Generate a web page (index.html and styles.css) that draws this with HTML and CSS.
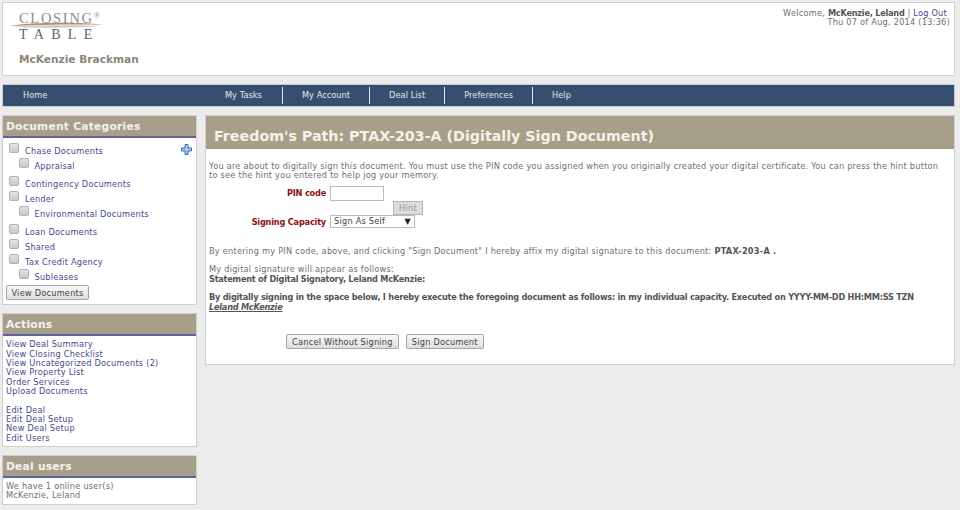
FILE: index.html
```html
<!DOCTYPE html>
<html lang="en">
<head>
<meta charset="utf-8">
<title>Closing Table</title>
<link rel="stylesheet" href="styles.css">
</head>
<body>
<header class="masthead">
  <div class="brand">
    <div class="logo">
      <svg class="swoosh" width="94" height="10" viewBox="0 0 94 10"><path d="M0 5C20 1 72 1 94 4C72 3 24 4 0 5Z" fill="#a98f80"/><path d="M4 6C24 4 70 4 90 5C70 7 24 7 4 6Z" fill="#d8c8bd"/></svg>
      <div class="logo-top">CLOSING<sup>®</sup></div>
      <div class="logo-bottom">TABLE</div>
    </div>
    <div class="company">McKenzie Brackman</div>
  </div>
  <div class="welcome">
    <div class="welcome-line">Welcome, <b>McKenzie, Leland</b> | <a href="#">Log Out</a></div>
    <div>Thu 07 of Aug, 2014 (13:36)</div>
  </div>
</header>
<nav class="nav">
  <a class="nav-home" href="#">Home</a>
  <a class="nav-item nav-tasks" href="#">My Tasks</a>
  <a class="nav-item" href="#">My Account</a>
  <a class="nav-item" href="#">Deal List</a>
  <a class="nav-item" href="#">Preferences</a>
  <a class="nav-item nav-last" href="#">Help</a>
</nav>
<div class="columns">
  <aside class="side">
    <section class="panel">
      <h2 class="panel-title">Document Categories</h2>
      <div class="panel-body tree">
        <svg class="plus" width="11" height="11" viewBox="0 0 11 11"><path d="M4 .5h3v3.500h3.500v3H7v3.500H4V7H.5V4H4Z" fill="#a9c4e6" stroke="#3f6fb5"/></svg>
        <div class="row"><input type="checkbox" class="check"><a href="#">Chase Documents</a></div>
        <div class="row sub last-sub"><input type="checkbox" class="check"><a href="#">Appraisal</a></div>
        <div class="row"><input type="checkbox" class="check"><a href="#">Contingency Documents</a></div>
        <div class="row"><input type="checkbox" class="check"><a href="#">Lender</a></div>
        <div class="row sub last-sub"><input type="checkbox" class="check"><a href="#">Environmental Documents</a></div>
        <div class="row"><input type="checkbox" class="check"><a href="#">Loan Documents</a></div>
        <div class="row"><input type="checkbox" class="check"><a href="#">Shared</a></div>
        <div class="row"><input type="checkbox" class="check"><a href="#">Tax Credit Agency</a></div>
        <div class="row sub"><input type="checkbox" class="check"><a href="#">Subleases</a></div>
        <button class="btn view-btn" type="button">View Documents</button>
      </div>
    </section>
    <section class="panel">
      <h2 class="panel-title">Actions</h2>
      <div class="panel-body links">
        <a href="#">View Deal Summary</a>
        <a href="#">View Closing Checklist</a>
        <a href="#">View Uncategorized Documents (2)</a>
        <a href="#">View Property List</a>
        <a href="#">Order Services</a>
        <a class="gap" href="#">Upload Documents</a>
        <a href="#">Edit Deal</a>
        <a href="#">Edit Deal Setup</a>
        <a href="#">New Deal Setup</a>
        <a href="#">Edit Users</a>
      </div>
    </section>
    <section class="panel">
      <h2 class="panel-title">Deal users</h2>
      <div class="panel-body users">
        <div>We have 1 online user(s)</div>
        <div>McKenzie, Leland</div>
      </div>
    </section>
  </aside>
  <main class="main">
    <h1 class="main-title">Freedom's Path: PTAX-203-A (Digitally Sign Document)</h1>
    <div class="main-body">
      <p class="intro">You are about to digitally sign this document. You must use the PIN code you assigned when you originally created your digital certificate. You can press the hint button to see the hint you entered to help jog your memory.</p>
      <div class="form">
        <label class="form-label">PIN code</label>
        <input class="pin" type="text">
        <button class="hint" type="button" disabled>Hint</button>
        <label class="form-label">Signing Capacity</label>
        <div class="select"><span>Sign As Self</span><span class="arrow">▼</span></div>
      </div>
      <p class="affix">By entering my PIN code, above, and clicking "Sign Document" I hereby affix my digital signature to this document: <b>PTAX-203-A .</b></p>
      <p class="appear">My digital signature will appear as follows:<br><b>Statement of Digital Signatory, Leland McKenzie:</b></p>
      <p class="execute"><b>By digitally signing in the space below, I hereby execute the foregoing document as follows: in my individual capacity. Executed on YYYY-MM-DD HH:MM:SS TZN</b><br><b class="sig">Leland McKenzie</b></p>
      <div class="actions">
        <button class="btn" type="button">Cancel Without Signing</button>
        <button class="btn" type="button">Sign Document</button>
      </div>
    </div>
  </main>
</div>
</body>
</html>
```
FILE: styles.css
```css
* { box-sizing: border-box; }
html, body { height: 100%; }
body {
  margin: 0;
  padding: 2px 5px 0 2px;
  height: 510px;
  overflow: hidden;
  background: #ececec;
  color: #6f6f6f;
  font: 8.2px/9.35px "DejaVu Sans", Verdana, sans-serif;
  letter-spacing: 0.24px;
}
a { color: #47478f; text-decoration: none; }
b { color: #555; letter-spacing: -0.24px; }
.affix b { letter-spacing: 0.24px; }

.masthead {
  height: 74px;
  background: #fff;
  border: 1px solid #d2d2d2;
  display: flex;
  justify-content: space-between;
}
.brand { padding: 7px 0 0 16px; }
.logo { position: relative; width: 94px; font-family: "Liberation Serif", serif; }
.swoosh { position: absolute; left: -9px; top: 11px; }
.logo-top { font-size: 14.5px; line-height: 17px; letter-spacing: 1.7px; color: #8d8d8d; }
.logo-top sup { font-size: 8px; line-height: 0; vertical-align: 5px; letter-spacing: 0; }
.logo-bottom { font-size: 14px; line-height: 15px; letter-spacing: 7.3px; color: #566878; }
.company { margin-top: 11px; font-size: 10.6px; line-height: 13px; font-weight: bold; color: #8b857a; letter-spacing: 0; }
.welcome { padding: 6px 0 0; text-align: right; margin-right: 4px; }
.welcome-line { padding-right: 3px; }

.nav {
  margin-top: 8px;
  height: 23px;
  background: #364f70;
  border: 1px solid #c9ced4;
  display: flex;
  align-items: center;
}
.nav a { color: #e8e8e8; font-size: 8.2px; line-height: 17px; height: 17px; letter-spacing: 0.06px; }
.nav-home { width: 203px; padding-left: 20px; }
.nav-item { padding: 0 19px; border-right: 1px solid #e8e8e8; }
.nav-tasks { padding-right: 20px; }
.nav-item.nav-last { border-right: 0; }

.columns { margin-top: 8px; display: flex; gap: 8px; align-items: flex-start; }
.side { width: 195px; display: flex; flex-direction: column; gap: 8px; }
.panel { background: #fff; border: 1px solid #cfcfcf; }
.panel-title {
  margin: 0;
  height: 22px;
  padding-left: 3px;
  background: #a89f8b;
  border-bottom: 2px solid #5d62a0;
  color: #f4f2ea;
  font-size: 10.7px;
  line-height: 21px;
  font-weight: bold;
}
.panel-body { padding: 4px 3px 3px; }
.tree { position: relative; padding: 4px 6px 4px 6px; }
.plus { position: absolute; top: 6px; right: 4px; }
.row { height: 14.7px; display: flex; align-items: flex-start; }
.row a { margin-top: 5px; }
.sub { padding-left: 9.5px; }
.last-sub { margin-bottom: 4px; }
.check {
  appearance: none;
  margin: 1px 6px 0 0;
  width: 10px;
  height: 10px;
  flex: none;
  background: linear-gradient(#e4e4e4, #c8c8c8);
  border: 1px solid #b0b0b0;
  border-radius: 2px;
}
.btn {
  font: 8.2px/10px "DejaVu Sans", Verdana, sans-serif;
  letter-spacing: 0.24px;
  color: #444;
  height: 15px;
  padding: 0 5px;
  background: linear-gradient(#f8f8f8, #dedede);
  border: 1px solid #a6a6a6;
  border-radius: 2px;
}
.view-btn { display: block; margin: 3px 0 0 -3px; width: 83px; padding: 0; }
.links a { display: block; }
.links a.gap { margin-bottom: 9.35px; }

.main { flex: 1; background: #fff; border: 1px solid #cfcfcf; height: 250px; }
.main-title {
  margin: 0;
  height: 33px;
  padding: 7px 0 0 8px;
  background: #a89f8b;
  color: #f4f2ea;
  font-size: 14.25px;
  line-height: 26px;
  font-weight: bold;
  letter-spacing: 0;
}
.main-body { padding: 13px 3px 0 3px; }
.main-body p { margin: 0; }
.main-body .intro { max-width: 736px; }
.form {
  margin-top: 5px;
  display: grid;
  grid-template-columns: 117px 54px 9px 30px 1fr;
  grid-template-rows: 15px 14px 13px;
}
.form-label { grid-column: 1; text-align: right; color: #8c1010; font-weight: bold; line-height: 14px; letter-spacing: -0.2px; }
.pin { grid-column: 2; grid-row: 1; width: 54px; height: 15px; margin: 0 0 0 4px; border: 1px solid #bbb; padding: 0; background: #fff; }
.hint {
  grid-column: 4;
  grid-row: 2;
  margin-left: 4px;
  width: 30px;
  height: 14px;
  padding: 0;
  font: 8.2px/10px "DejaVu Sans", Verdana, sans-serif;
  letter-spacing: 0.24px;
  color: #999;
  background: #ddd;
  border: 1px solid #b5b5b5;
}
.form-label:nth-of-type(2) { grid-row: 3; }
.select {
  grid-column: 2 / 6;
  grid-row: 3;
  margin-left: 4px;
  width: 85px;
  height: 13px;
  padding: 0 3px;
  display: flex;
  justify-content: space-between;
  align-items: center;
  border: 1px solid #bbb;
  color: #444;
  background: #fff;
}
.arrow { font-size: 8px; color: #222; }
.main-body .affix { margin-top: 19px; }
.main-body .appear { margin-top: 9.35px; }
.main-body .execute { margin-top: 9.35px; }
.sig { font-style: italic; text-decoration: underline; }
.actions { margin-top: 22px; padding-left: 77px; display: flex; gap: 7px; }
```
